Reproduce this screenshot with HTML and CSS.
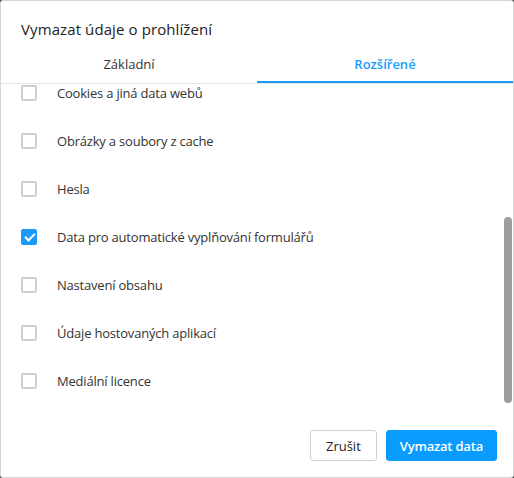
FILE: index.html
```html
<!DOCTYPE html>
<html lang="cs">
<head>
  <meta charset="UTF-8">
  <meta name="viewport" content="width=device-width, initial-scale=1.0">
  <title>Vymazat údaje o prohlížení</title>
  <link rel="stylesheet" href="styles.css">
</head>
<body>
  <div class="dialog">
    <h1 class="dialog-title">Vymazat údaje o prohlížení</h1>

    <div class="tabs">
      <div class="tab">Základní</div>
      <div class="tab active">Rozšířené</div>
    </div>

    <div class="scroll-area">
      <div class="options" id="options">
        <div class="options-list">
          <label class="option"><span class="box"></span>Cookies a jiná data webů</label>
          <label class="option"><span class="box"></span>Obrázky a soubory z cache</label>
          <label class="option"><span class="box"></span>Hesla</label>
          <label class="option"><span class="box checked"></span>Data pro automatické vyplňování formulářů</label>
          <label class="option"><span class="box"></span>Nastavení obsahu</label>
          <label class="option"><span class="box"></span>Údaje hostovaných aplikací</label>
          <label class="option"><span class="box"></span>Mediální licence</label>
        </div>
      </div>
      <div class="scroll-thumb"></div>
    </div>

    <div class="actions">
      <button class="btn">Zrušit</button>
      <button class="btn primary">Vymazat data</button>
    </div>
  </div>

  <script src="app.js"></script>
</body>
</html>
```

FILE: styles.css
```css
* {
  box-sizing: border-box;
}
html, body {
  margin: 0;
  padding: 0;
  height: 100%;
}
body {
  font-family: 'Open Sans', 'Noto Sans', sans-serif;
  background: #4d4d4d;
  color: #333;
}
.dialog {
  height: 100%;
  background: #fff;
  border: 1px solid #d6d6d6;
  border-radius: 3px;
  display: flex;
  flex-direction: column;
}
.dialog-title {
  margin: 0;
  padding: 18px 20px 0;
  height: 44px;
  font-size: 15px;
  line-height: 20px;
  font-weight: 400;
  color: #222;
  letter-spacing: 0.1px;
}
.tabs {
  display: flex;
  border-bottom: 1px solid #e6e6e6;
  padding-right: 6px;
}
.tab {
  flex: 1;
  height: 38px;
  display: flex;
  align-items: center;
  justify-content: center;
  font-size: 13px;
  color: #333;
}
.tab.active {
  color: #1a9bfc;
  font-weight: 600;
  border-bottom: 2px solid #1a9bfc;
  margin-bottom: -1px;
  margin-right: -6px;
  padding-top: 2px;
}
.scroll-area {
  position: relative;
  height: 321px;
}
.options {
  height: 100%;
  overflow: hidden;
}
/* room for the rows scrolled out of view above */
.options-list {
  padding-top: 96px;
}
.scroll-thumb {
  position: absolute;
  top: 133px;
  right: 1px;
  width: 8px;
  height: 186px;
  background: #9e9e9e;
  border-radius: 4px;
}
.option {
  display: flex;
  align-items: center;
  height: 48px;
  padding-left: 20px;
  font-size: 13px;
  letter-spacing: -0.2px;
  color: #333;
}
.box {
  width: 16px;
  height: 16px;
  border: 2px solid #cfcfcf;
  border-radius: 2px;
  margin-right: 20px;
  flex-shrink: 0;
  position: relative;
}
.box.checked {
  background: #1a9bfc;
  border-color: #1a9bfc;
}
.box.checked::after {
  content: "";
  position: absolute;
  left: 4px;
  top: 0;
  width: 4px;
  height: 8px;
  border: solid #fff;
  border-width: 0 2px 2px 0;
  transform: rotate(45deg);
}
.actions {
  display: flex;
  justify-content: flex-end;
  gap: 9px;
  padding: 25px 16px 0;
}
.btn {
  height: 31px;
  padding: 0 15px;
  font-family: inherit;
  font-size: 13px;
  color: #222;
  background: #fff;
  border: 1px solid #cfcfcf;
  border-radius: 3px;
}
.btn.primary {
  padding: 0 13px;
  background: #0a9bff;
  border-color: #0a9bff;
  color: #fff;
  font-weight: 600;
  letter-spacing: -0.2px;
}
```

FILE: app.js
```js
const options = document.getElementById("options");
options.scrollTop = options.scrollHeight;
```
